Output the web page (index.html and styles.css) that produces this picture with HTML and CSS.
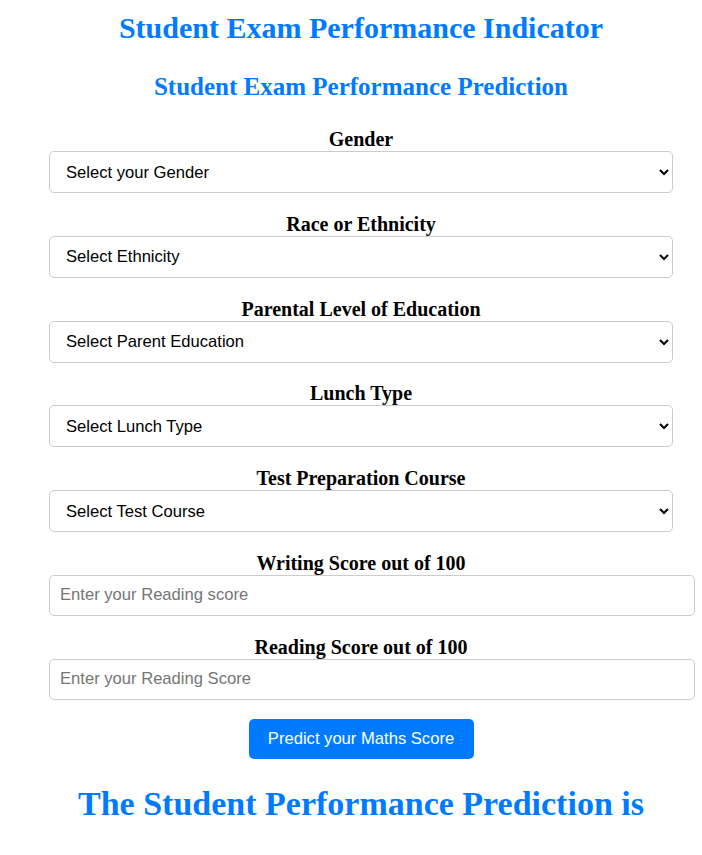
FILE: index.html
```html
<!DOCTYPE html>
<html>
<head>
<meta charset="utf-8">
<link rel="stylesheet" href="styles.css">
</head>
<body>
<div class="page">
  <h1 class="title">Student Exam Performance Indicator</h1>
  <form class="form">
    <h2 class="subtitle">Student Exam Performance Prediction</h2>
    <div class="group">
      <label class="label">Gender</label>
      <select class="field select">
        <option>Select your Gender</option>
      </select>
    </div>
    <div class="group">
      <label class="label">Race or Ethnicity</label>
      <select class="field select">
        <option>Select Ethnicity</option>
      </select>
    </div>
    <div class="group">
      <label class="label">Parental Level of Education</label>
      <select class="field select">
        <option>Select Parent Education</option>
      </select>
    </div>
    <div class="group">
      <label class="label">Lunch Type</label>
      <select class="field select">
        <option>Select Lunch Type</option>
      </select>
    </div>
    <div class="group">
      <label class="label">Test Preparation Course</label>
      <select class="field select">
        <option>Select Test Course</option>
      </select>
    </div>
    <div class="group">
      <label class="label">Writing Score out of 100</label>
      <input class="field input" type="number" placeholder="Enter your Reading score">
    </div>
    <div class="group">
      <label class="label">Reading Score out of 100</label>
      <input class="field input" type="number" placeholder="Enter your Reading Score">
    </div>
    <div class="actions">
      <button class="btn" type="button">Predict your Maths Score</button>
    </div>
  </form>
  <h2 class="result">The Student Performance Prediction is</h2>
</div>
</body>
</html>
```

FILE: styles.css
```css
html, body {
  margin: 0;
  padding: 0;
  background: #ffffff;
}
.page {
  width: 624px;
  margin-left: 49px;
  font-family: "Liberation Serif", "Times New Roman", serif;
  text-align: center;
}
.title {
  color: #007bff;
  font-size: 30px;
  font-weight: bold;
  margin: 10px 0 0 0;
  line-height: 35px;
}
.subtitle {
  color: #007bff;
  font-size: 25px;
  font-weight: bold;
  margin: 27px 0 27px 0;
  line-height: 29px;
}
.group {
  margin-bottom: 19.75px;
}
.label {
  display: block;
  font-size: 20px;
  font-weight: bold;
  color: #000;
  line-height: 23px;
}
.field {
  display: block;
  font-family: "Liberation Sans", Arial, sans-serif;
  font-size: 16.6px;
  color: #000;
  border: 1px solid #ccc;
  border-radius: 5px;
  background: #fff;
  text-align: left;
}
.select {
  width: 624px;
  height: 42px;
  padding: 0 12px;
}
.input {
  width: 646px;
  height: 41px;
  padding: 0 10px;
  box-sizing: border-box;
  -moz-appearance: textfield;
}
.input::-webkit-outer-spin-button,
.input::-webkit-inner-spin-button {
  -webkit-appearance: none;
  margin: 0;
}
.input::placeholder {
  color: #757575;
}
.btn {
  background: #007bff;
  color: #fff;
  border: none;
  border-radius: 5px;
  font-family: "Liberation Sans", Arial, sans-serif;
  font-size: 16.6px;
  width: 225px;
  height: 40px;
  padding: 0;
}
.result {
  color: #007bff;
  font-size: 34px;
  font-weight: bold;
  margin: 25px 0 0 0;
  line-height: 40px;
}
```
